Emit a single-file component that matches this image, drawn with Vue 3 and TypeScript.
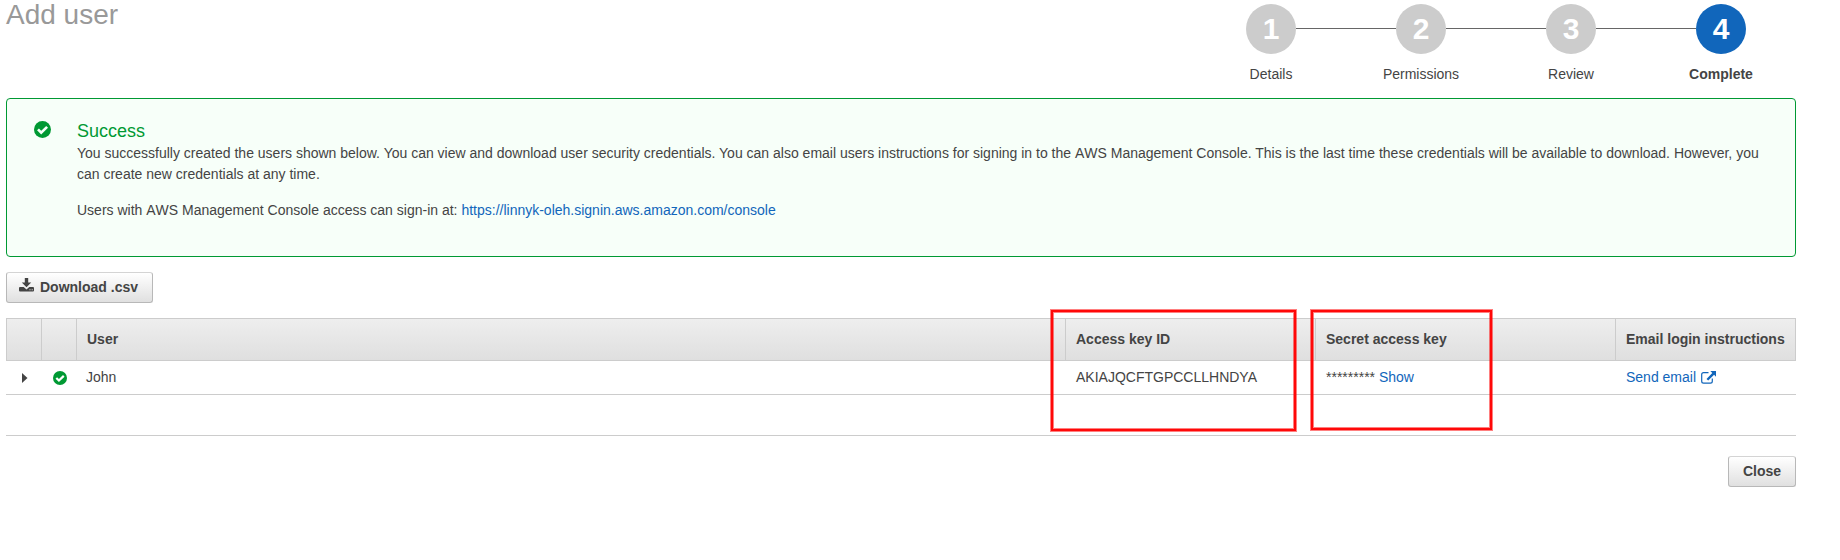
<script setup lang="ts">
interface Step {
  id: number
  label: string
}

interface UserRow {
  name: string
  accessKeyId: string
  secretMask: string
}

const steps: Step[] = [
  { id: 1, label: 'Details' },
  { id: 2, label: 'Permissions' },
  { id: 3, label: 'Review' },
  { id: 4, label: 'Complete' },
]
const currentStep = 4

const users: UserRow[] = [
  { name: 'John', accessKeyId: 'AKIAJQCFTGPCCLLHNDYA', secretMask: '*********' },
]
</script>

<template>
  <main class="page">
    <header class="top">
      <h1 class="title">Add user</h1>
      <ol class="steps">
        <li v-for="step in steps" :key="step.id" class="step" :class="{ active: step.id === currentStep }">
          <span class="circle">{{ step.id }}</span>
          <span class="label">{{ step.label }}</span>
        </li>
      </ol>
    </header>

    <section class="alert">
      <svg class="alert-icon" viewBox="0 0 17 17" width="17" height="17">
        <circle cx="8.5" cy="8.5" r="8.5" fill="#093" />
        <path d="M4 8.4l3.2 3.2 5.9-5.7" fill="none" stroke="#f7fff9" stroke-width="2.7" />
      </svg>
      <div class="alert-body">
        <h2>Success</h2>
        <p>
          You successfully created the users shown below. You can view and download user security credentials. You can
          also email users instructions for signing in to the <span class="brand">AWS</span> Management Console. This
          is the last time these credentials will be available to download. However, you can create new credentials at
          any time.
        </p>
        <p class="signin">
          Users with <span class="brand">AWS</span> Management Console access can sign-in at:
          <a>https://linnyk-oleh.signin.aws.amazon.com/console</a>
        </p>
      </div>
    </section>

    <button class="btn download" type="button">
      <svg viewBox="0 0 15 14" width="15" height="14">
        <path
          fill="#444"
          fill-rule="evenodd"
          d="M5.8 0h3.4v4.6h3L7.5 9.2 2.8 4.6h3zM1 9h3.7l2.8 2.4L10.3 9H14q1 0 1 1v2.6q0 1-1 1H1q-1 0-1-1V10q0-1 1-1zM10.5 11.3v1h1v-1zM12.7 11.3v1h1v-1z"
        />
      </svg>
      <span>Download .csv</span>
    </button>

    <section class="table">
      <div class="row head">
        <div class="cell"></div>
        <div class="cell"></div>
        <div class="cell">User</div>
        <div class="cell">Access key ID</div>
        <div class="cell">Secret access key</div>
        <div class="cell">Email login instructions</div>
      </div>
      <div v-for="user in users" :key="user.name" class="row body">
        <div class="cell icon-cell">
          <svg viewBox="0 0 6 10" width="6" height="10"><path d="M0 0l5.5 5L0 10z" fill="#444" /></svg>
        </div>
        <div class="cell icon-cell">
          <svg viewBox="0 0 17 17" width="14" height="14">
            <circle cx="8.5" cy="8.5" r="8.5" fill="#093" />
            <path d="M4 8.4l3.2 3.2 5.9-5.7" fill="none" stroke="#fff" stroke-width="2.7" />
          </svg>
        </div>
        <div class="cell name">{{ user.name }}</div>
        <div class="cell">{{ user.accessKeyId }}</div>
        <div class="cell">{{ user.secretMask }}&nbsp;<a>Show</a></div>
        <div class="cell">
          <a>Send email</a>
          <svg class="ext" viewBox="0 0 15 13" width="15" height="13">
            <path
              d="M7.5 1.6H2.6Q.7 1.6.7 3.5v6.8q0 1.9 1.9 1.9h6.8q1.9 0 1.9-1.9V7.6"
              fill="none"
              stroke="#1166bb"
              stroke-width="1.2"
            />
            <path d="M9.3 0H15v5.7l-1.9-1.9-5.9 5.8-1.7-1.7 5.8-5.9z" fill="#1166bb" />
          </svg>
        </div>
      </div>
      <div class="filler"></div>
      <div class="mark mark-id"></div>
      <div class="mark mark-secret"></div>
    </section>

    <footer class="actions">
      <button class="btn close" type="button">Close</button>
    </footer>
  </main>
</template>

<style>
body {
  margin: 0;
  background: #fff;
}
</style>

<style scoped>
.page {
  box-sizing: border-box;
  width: 1796px;
  height: 560px;
  padding-left: 6px;
  font: 14px/21px 'Liberation Sans', Arial, sans-serif;
  color: #444;
}
.top {
  display: flex;
  justify-content: space-between;
  height: 98px;
}
.title {
  margin: 0;
  font-size: 28px;
  font-weight: 400;
  line-height: 30px;
  color: #999;
}
.steps {
  display: flex;
  margin: 0;
  padding: 4px 0 0;
  list-style: none;
}
.step {
  position: relative;
  display: flex;
  flex-direction: column;
  align-items: center;
  width: 150px;
}
.circle {
  width: 50px;
  height: 50px;
  border-radius: 50%;
  background: #ccc;
  color: #fff;
  font-size: 30px;
  font-weight: 700;
  line-height: 50px;
  text-align: center;
}
/* connector to the next step */
.step:not(:last-child)::after {
  content: '';
  position: absolute;
  top: 24px;
  left: 100px;
  width: 100px;
  height: 1px;
  background: #666;
}
.label {
  margin-top: 10px;
}
.active .circle {
  background: #1166bb;
}
.active .label {
  font-weight: 700;
}
.alert {
  box-sizing: border-box;
  display: flex;
  height: 159px;
  padding: 22px 33px 0 27px;
  border: 1px solid #093;
  border-radius: 4px;
  background: #f7fff9;
}
.alert-icon {
  flex: none;
  margin: 0 26px 0 0;
}
.alert-body h2 {
  margin: 0 0 1px;
  font-size: 18px;
  font-weight: 400;
  line-height: 21px;
  color: #093;
}
.alert-body p {
  margin: 0;
}
.alert-body .signin {
  margin-top: 15px;
}
.brand {
  font-kerning: none;
}
a {
  color: #1166bb;
}
.btn {
  box-sizing: border-box;
  display: flex;
  align-items: center;
  height: 31px;
  padding: 0;
  border: 1px solid #b8b8b8;
  border-top-color: #d4d4d4;
  border-radius: 3px;
  background: linear-gradient(#fff, #e0e0e0);
  color: #444;
  font: 700 14px/21px 'Liberation Sans', Arial, sans-serif;
}
.download {
  width: 147px;
  margin-top: 15px;
  padding-left: 12px;
  gap: 6px;
}
.download svg {
  margin-bottom: 5px;
}
.table {
  position: relative;
  margin-top: 15px;
}
.row {
  display: grid;
  grid-template-columns: 35px 35px 989px 250px 300px 181px;
  box-sizing: border-box;
}
.head {
  height: 43px;
  border: solid #ccc;
  border-width: 1px 0;
  background: linear-gradient(#eee, #dfdfdf);
  font-weight: 700;
}
.head .cell {
  border-left: 1px solid #ccc;
  line-height: 41px;
}
.head .cell:last-child {
  border-right: 1px solid #ccc;
}
.cell {
  box-sizing: border-box;
  padding-left: 10px;
  white-space: nowrap;
}
.body {
  height: 34px;
  border-bottom: 1px solid #ccc;
}
.body .cell {
  padding-left: 11px;
  line-height: 32px;
}
.body .name {
  padding-left: 10px;
}
.body .icon-cell {
  display: flex;
  align-items: center;
  padding-left: 16px;
}
.body .icon-cell + .icon-cell {
  padding-left: 12px;
}
.ext {
  margin-left: 5px;
  vertical-align: -2px;
}
.filler {
  height: 40px;
  border-bottom: 1px solid #ccc;
}
.mark {
  position: absolute;
  box-sizing: border-box;
  border: 2px solid #ff0808;
  box-shadow:
    0 0 0 1px rgba(255, 0, 0, 0.5),
    inset 0 0 0 1px rgba(255, 0, 0, 0.5);
}
.mark-id {
  left: 1045px;
  top: -8px;
  width: 245px;
  height: 121px;
}
.mark-secret {
  left: 1305px;
  top: -8px;
  width: 181px;
  height: 120px;
}
.actions {
  display: flex;
  justify-content: flex-end;
  margin-top: 20px;
}
.close {
  width: 68px;
  justify-content: center;
}
</style>
